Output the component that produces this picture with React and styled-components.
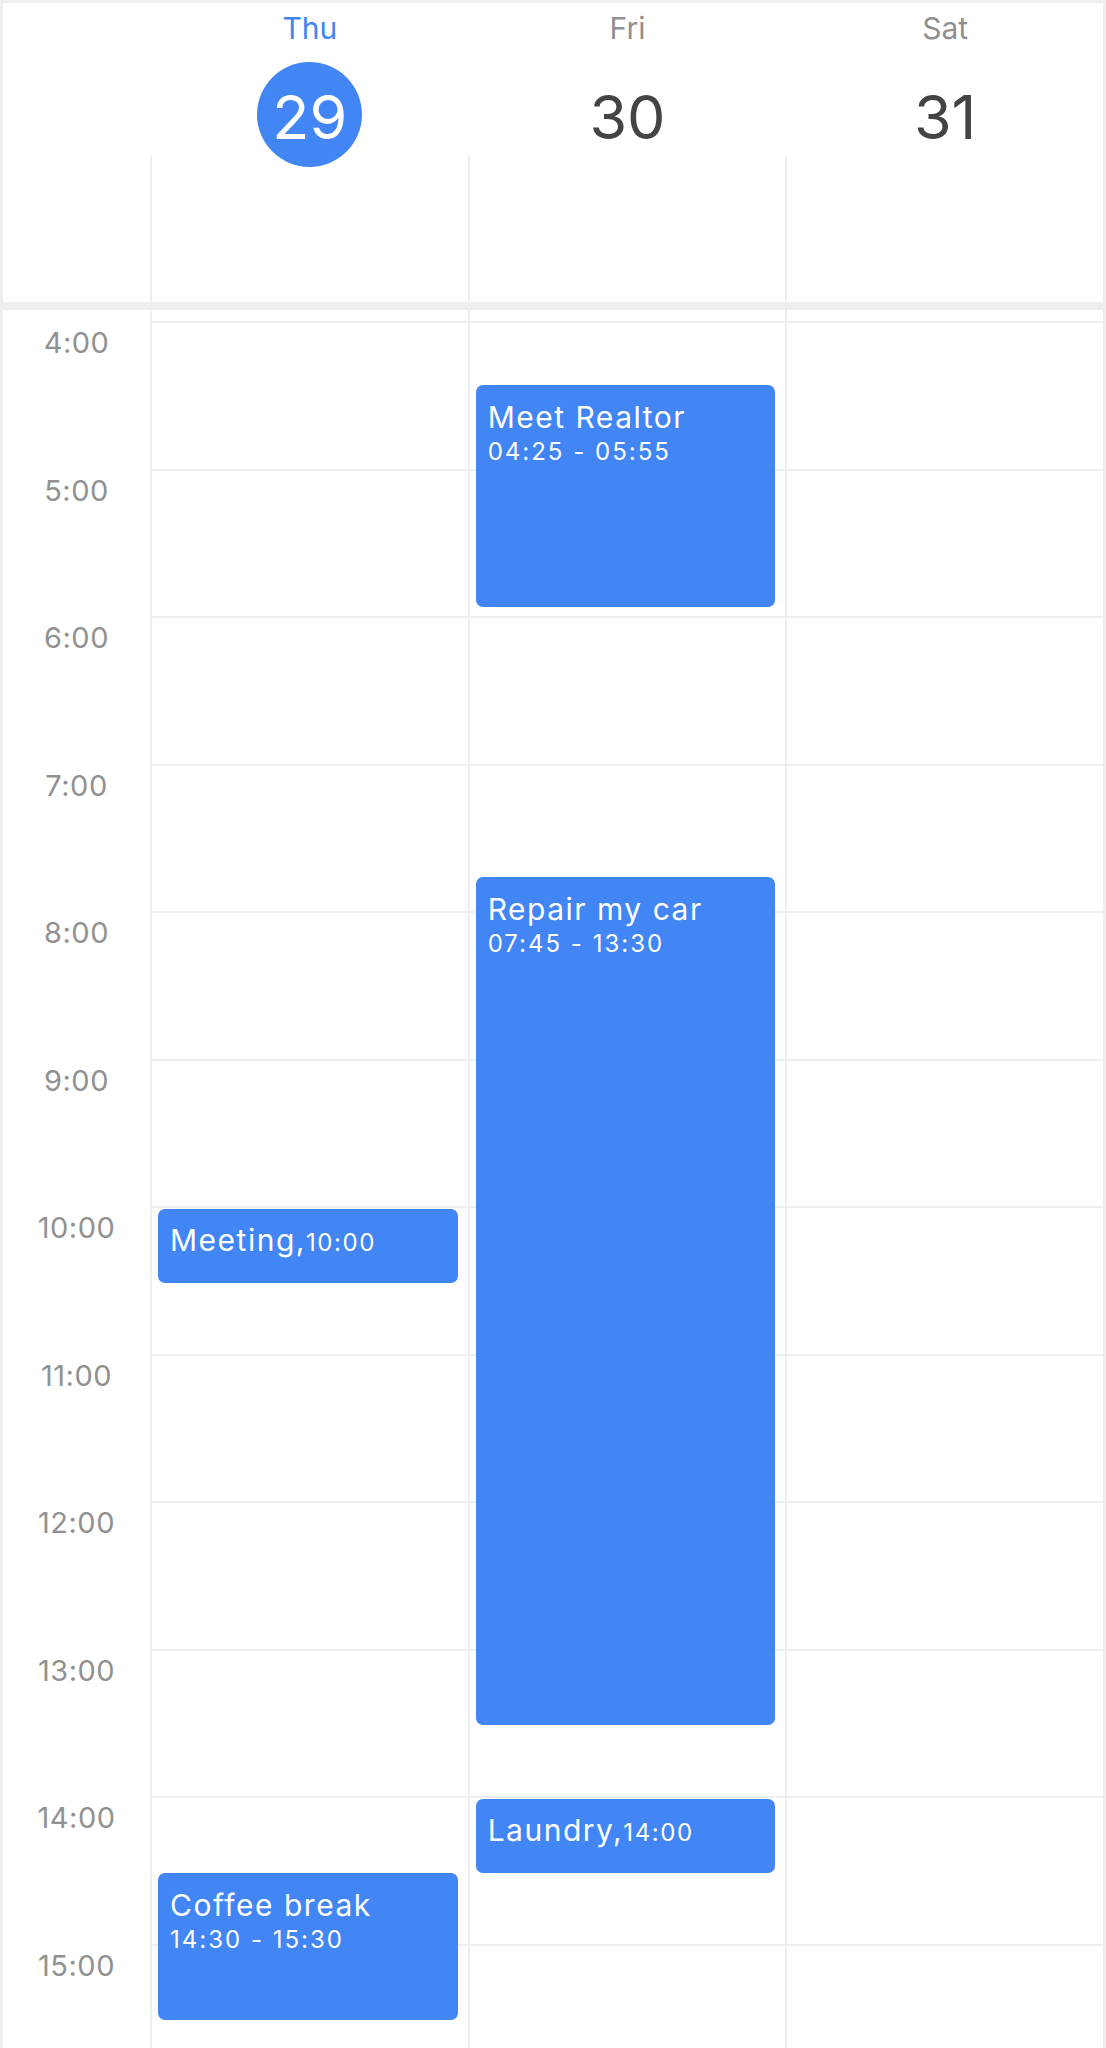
import styled, { createGlobalStyle } from 'styled-components'

const BLUE = '#4285f4'
const LINE = '#eeeeee'
const HOUR = 147.5
const FIRST_HOUR = 4

const GlobalStyle = createGlobalStyle`
    html, body {
        margin: 0;
        padding: 0;
        background: #fff;
        overflow: hidden;
    }
`

const Frame = styled.div`
    width: 1106px;
    height: 2048px;
    box-sizing: border-box;
    border: 3px solid ${LINE};
    border-bottom: none;
    background: #fff;
    overflow: hidden;
    font-family: Inter, "Noto Sans", sans-serif;
`

const Columns = styled.div`
    display: grid;
    grid-template-columns: 147px repeat(3, 1fr);
`

const HeaderTop = styled(Columns)`
    grid-template-rows: 153px;
`

const DayHead = styled.div`
    border-left: 2px solid transparent;
    display: flex;
    flex-direction: column;
    align-items: center;
    padding-top: 7px;
`

const DayName = styled.div`
    font-size: 30px;
    line-height: 36px;
    color: ${p => (p.$today ? BLUE : '#8f8f8f')};
`

const DateBadge = styled.div`
    margin-top: 16px;
    width: 105px;
    height: 105px;
    flex-shrink: 0;
    box-sizing: border-box;
    padding-top: 5px;
    border-radius: 50%;
    display: flex;
    align-items: center;
    justify-content: center;
    font-size: 61px;
    line-height: 1;
    background: ${p => (p.$today ? BLUE : 'transparent')};
    color: ${p => (p.$today ? '#fff' : '#444')};
`

const AllDayRow = styled(Columns)`
    height: 146px;
`

const AllDayCell = styled.div`
    border-left: 2px solid ${LINE};
`

const Divider = styled.div`
    height: 8px;
    background: ${LINE};
`

const TimeCol = styled.div`
    padding-top: 11px;
`

const HourLabel = styled.div`
    height: ${HOUR}px;
    box-sizing: border-box;
    padding-top: 4px;
    text-align: center;
    font-size: 29px;
    line-height: 35px;
    letter-spacing: 0.5px;
    color: #919191;
`

const DayCol = styled.div`
    position: relative;
    border-left: 2px solid ${LINE};
    padding-top: 11px;
`

const HourCell = styled.div`
    height: ${HOUR}px;
    box-sizing: border-box;
    border-top: 2px solid ${LINE};
`

const EventBox = styled.div`
    position: absolute;
    left: 6px;
    right: 10px;
    box-sizing: border-box;
    padding: ${p => (p.$compact ? '13px' : '14px')} 12px 0;
    border-radius: 7px;
    background: ${BLUE};
    color: #fff;
    overflow: hidden;
`

const EventTitle = styled.div`
    font-size: 30px;
    line-height: 36px;
    letter-spacing: 1.5px;
    white-space: nowrap;
`

const EventTime = styled.div`
    margin-top: 2px;
    font-size: 24px;
    line-height: 29px;
    letter-spacing: 2px;
`

const InlineTime = styled.span`
    font-size: 24px;
    letter-spacing: 1.6px;
`

const days = [
    { name: 'Thu', date: 29, today: true },
    { name: 'Fri', date: 30 },
    { name: 'Sat', date: 31 },
]

const hours = Array.from({ length: 12 }, (_, i) => FIRST_HOUR + i)

const events = [
    { day: 1, title: 'Meet Realtor', start: '04:25', end: '05:55' },
    { day: 1, title: 'Repair my car', start: '07:45', end: '13:30' },
    { day: 0, title: 'Meeting', start: '10:00', end: '10:30' },
    { day: 1, title: 'Laundry', start: '14:00', end: '14:30' },
    { day: 0, title: 'Coffee break', start: '14:30', end: '15:30' },
]

const toMin = (t) => {
    const [h, m] = t.split(':').map(Number)
    return h * 60 + m
}

function CalendarEvent({ event }) {
    const start = toMin(event.start)
    const end = toMin(event.end)
    const top = 11 + ((start - FIRST_HOUR * 60) * HOUR) / 60 + 3
    const height = ((end - start) * HOUR) / 60
    const compact = end - start <= 30

    return (
        <EventBox $compact={compact} style={{ top, height }}>
            {compact ? (
                <EventTitle>
                    {event.title},<InlineTime>{event.start}</InlineTime>
                </EventTitle>
            ) : (
                <>
                    <EventTitle>{event.title}</EventTitle>
                    <EventTime>{event.start} - {event.end}</EventTime>
                </>
            )}
        </EventBox>
    )
}

export default function App() {
    return (
        <>
            <GlobalStyle />
            <Frame>
                <HeaderTop>
                    <div />
                    {days.map(d => (
                        <DayHead key={d.name}>
                            <DayName $today={d.today}>{d.name}</DayName>
                            <DateBadge $today={d.today}>{d.date}</DateBadge>
                        </DayHead>
                    ))}
                </HeaderTop>
                <AllDayRow>
                    <div />
                    {days.map(d => <AllDayCell key={d.name} />)}
                </AllDayRow>
                <Divider />
                <Columns>
                    <TimeCol>
                        {hours.map(h => <HourLabel key={h}>{h}:00</HourLabel>)}
                    </TimeCol>
                    {days.map((d, i) => (
                        <DayCol key={d.name}>
                            {hours.map(h => <HourCell key={h} />)}
                            {events.filter(e => e.day === i).map(e => (
                                <CalendarEvent key={e.title} event={e} />
                            ))}
                        </DayCol>
                    ))}
                </Columns>
            </Frame>
        </>
    )
}
